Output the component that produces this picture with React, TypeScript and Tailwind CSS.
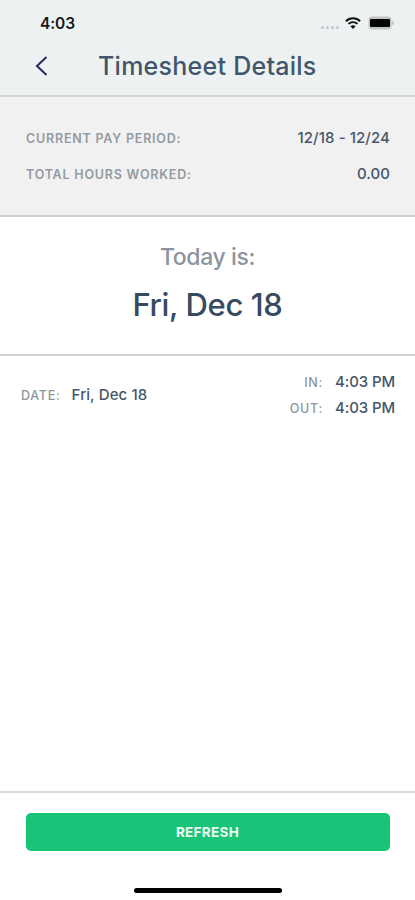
import type { ReactNode } from "react";

function StatusBar() {
  return (
    <div className="flex h-[46px] items-center justify-between pl-10 pr-[21px]">
      <span className="mt-px text-[15.5px] font-semibold leading-5 tracking-[-0.1px] text-[#15181b]">4:03</span>
      <div className="flex items-center">
        <div className="mr-[6px] mt-[8px] flex gap-[2px]">
          <i className="size-[3px] rounded-full bg-[#c2c6c8]" />
          <i className="size-[3px] rounded-full bg-[#c2c6c8]" />
          <i className="size-[3px] rounded-full bg-[#c2c6c8]" />
          <i className="size-[3px] rounded-full bg-[#c2c6c8]" />
        </div>
        <svg className="mr-[7px] h-[12px] w-[16px]" viewBox="0 0 16 12" fill="none" stroke="#101214">
          <path d="M0.9 4.2C4.8 0.4 11.2 0.4 15.1 4.2" strokeWidth="2" />
          <path d="M3.5 6.9C6 4.5 10 4.5 12.5 6.9" strokeWidth="1.9" />
          <path d="M8 11.9L5.4 9.3C7 7.9 9 7.9 10.6 9.3Z" fill="#101214" stroke="none" />
        </svg>
        <svg className="h-[14px] w-[26px]" viewBox="0 0 26 14">
          <rect x="0.5" y="0.5" width="23" height="13" rx="3.5" fill="#c0c4c5" />
          <rect x="2" y="3" width="20" height="8" rx="1" fill="#050505" />
          <path d="M24.5 4.8C26.2 5.4 26.2 8.6 24.5 9.2Z" fill="#a8acad" />
        </svg>
      </div>
    </div>
  );
}

function SummaryRow({ label, children }: { label: string; children: ReactNode }) {
  return (
    <div className="flex h-9 items-center justify-between">
      <span className="pt-[2px] text-[12.5px] font-semibold tracking-[0.79px] text-[#939ba1]">{label}</span>
      <span className="text-[15px] font-medium tracking-[0.08px] text-[#46566a]">{children}</span>
    </div>
  );
}

function TimeRow({ label, time }: { label: string; time: string }) {
  return (
    <div className="flex h-[26px] items-center justify-end gap-3">
      <span className="pt-[2px] text-[12.5px] font-medium tracking-[0.75px] text-[#8d949d]">{label}</span>
      <span className="text-[15px] font-medium tracking-[-0.12px] text-[#46566a]">{time}</span>
    </div>
  );
}

export default function App() {
  return (
    <main className="flex h-[900px] w-full flex-col overflow-hidden bg-white font-['Inter',sans-serif]">
      <header className="h-[97px] shrink-0 border-b-2 border-[#d3d6d7] bg-[#edf1f2]">
        <StatusBar />
        <div className="flex h-10 items-center">
          <button aria-label="Back" className="ml-[35px] w-[14px]">
            <svg className="h-[20px] w-[13px]" viewBox="0 0 13 20" fill="none" stroke="#28285f" strokeWidth="2">
              <path d="M11.5 1L2 10L11.5 19" />
            </svg>
          </button>
          <h1 className="ml-[49px] whitespace-nowrap text-[25px] font-medium leading-8 tracking-[0.26px] text-[#42566b]">Timesheet Details</h1>
        </div>
      </header>
      <section className="h-[120px] shrink-0 border-b-2 border-[#cfd0d1] bg-[#f1f1f1] pl-[26px] pr-[25px] pt-[23px]">
        <SummaryRow label="CURRENT PAY PERIOD:">12/18 - 12/24</SummaryRow>
        <SummaryRow label="TOTAL HOURS WORKED:">0.00</SummaryRow>
      </section>
      <section className="flex h-[139px] shrink-0 flex-col items-center border-b-2 border-[#d2d2d2] pt-[24px]">
        <p className="text-[23px] font-medium leading-8 tracking-[-0.4px] text-[#8d949d]">Today is:</p>
        <p className="mt-[12px] text-[31px] font-medium leading-10 tracking-[-0.38px] text-[#364a60]">Fri, Dec 18</p>
      </section>
      <section className="flex flex-1 items-start justify-between pl-[21px] pr-5 pt-[13px]">
        <div className="flex h-[52px] items-center gap-[11px]">
          <span className="pt-[2px] text-[12.5px] font-medium tracking-[0.75px] text-[#8d949d]">DATE:</span>
          <span className="text-[15px] font-medium tracking-[0.1px] text-[#46566a]">Fri, Dec 18</span>
        </div>
        <div>
          <TimeRow label="IN:" time="4:03 PM" />
          <TimeRow label="OUT:" time="4:03 PM" />
        </div>
      </section>
      <footer className="flex h-[109px] shrink-0 flex-col items-center border-t-2 border-[#d9d9d9] px-[25.5px] pt-[19.5px]">
        <button className="h-[38px] w-full rounded-[5px] bg-[#19c378] pt-px text-[13.5px] font-bold tracking-[0.3px] text-[#e9fbf2]">REFRESH</button>
        <div className="mt-[37px] h-[5px] w-[148px] rounded-full bg-black" />
      </footer>
    </main>
  );
}
